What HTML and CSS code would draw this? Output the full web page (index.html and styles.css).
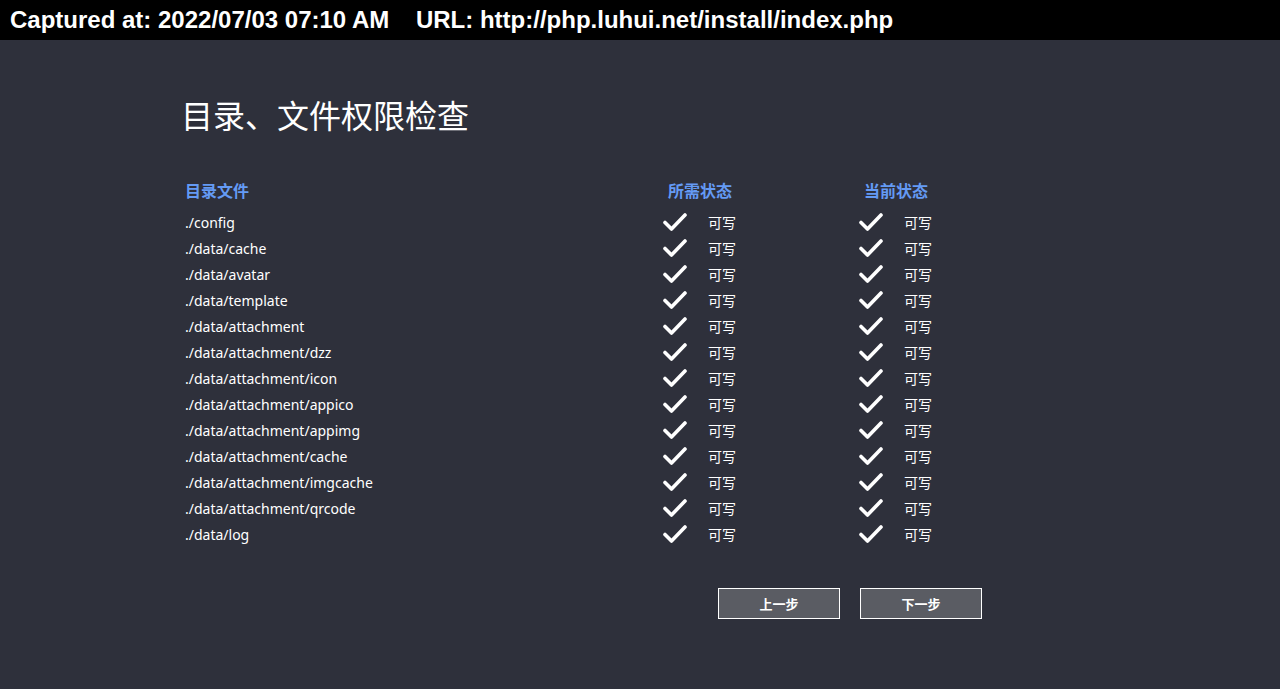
FILE: index.html
```html
<!DOCTYPE html>
<html lang="zh-CN">
<head>
  <meta charset="UTF-8">
  <title>目录、文件权限检查</title>
  <link rel="stylesheet" href="styles.css">
</head>
<body>

  <div class="capture-bar">Captured at: 2022/07/03 07:10 AM&nbsp;&nbsp;&nbsp;&nbsp;URL: http://php.luhui.net/install/index.php</div>

  <div class="main">
    <h1>目录、文件权限检查</h1>

    <div class="check-table">
      <div class="row head">
        <div class="cell">目录文件</div>
        <div class="cell state">所需状态</div>
        <div class="cell state">当前状态</div>
      </div>
    </div>

    <div class="actions">
      <button class="btn">上一步</button>
      <button class="btn">下一步</button>
    </div>
  </div>

  <script>
    var dirs = [
      "./config", "./data/cache", "./data/avatar", "./data/template",
      "./data/attachment", "./data/attachment/dzz", "./data/attachment/icon",
      "./data/attachment/appico", "./data/attachment/appimg", "./data/attachment/cache",
      "./data/attachment/imgcache", "./data/attachment/qrcode", "./data/log"
    ];

    var tick = '<svg class="tick" width="24" height="20" viewBox="0 0 24 20">' +
      '<polyline points="2,10.5 8.5,17 22,3" fill="none" stroke="#fff" stroke-width="3.6" stroke-linecap="round" stroke-linejoin="round"/></svg>';

    var table = document.querySelector(".check-table");
    dirs.forEach(function (d) {
      var row = document.createElement("div");
      row.className = "row";
      row.innerHTML =
        '<div class="cell">' + d + '</div>' +
        '<div class="cell">' + tick + '<span class="ok">可写</span></div>' +
        '<div class="cell">' + tick + '<span class="ok">可写</span></div>';
      table.appendChild(row);
    });
  </script>

</body>
</html>
```

FILE: styles.css
```css
body {
  margin: 0;
  background-color: #2e303b;
  color: #fff;
  font-family: "Noto Sans", "Noto Sans CJK SC", sans-serif;
  height: 689px;
  overflow: hidden;
}

.capture-bar {
  background: #000;
  height: 40px;
  line-height: 40px;
  padding-left: 10px;
  font-family: "Liberation Sans", Arial, sans-serif;
  font-weight: bold;
  font-size: 24px;
  white-space: nowrap;
}

.main {
  width: 918px;
  margin: 0 auto;
}

h1 {
  font-family: "Noto Sans CJK SC", sans-serif;
  font-weight: normal;
  font-size: 32px;
  line-height: 40px;
  margin: 54px 0 0 0;
}

.check-table {
  margin-top: 44px;
}

.row {
  display: grid;
  grid-template-columns: 478px 196px 196px;
  height: 26px;
  align-items: center;
  font-size: 14px;
}

.row.head {
  height: 31px;
  align-items: start;
  color: #649af4;
  font-weight: bold;
  font-size: 16px;
  font-family: "Noto Sans CJK SC", sans-serif;
}

.cell {
  padding-left: 4px;
  display: flex;
  align-items: center;
}

.cell.state {
  padding-left: 9px;
}

.tick {
  display: block;
}

.ok {
  margin-left: 21px;
  font-family: "Noto Sans CJK SC", sans-serif;
  font-size: 14px;
}

.actions {
  display: flex;
  gap: 20px;
  margin: 41px 0 0 537px;
}

.btn {
  width: 122px;
  height: 31px;
  background: #5a5c63;
  border: 1px solid #fff;
  color: #fff;
  font-family: "Noto Sans CJK SC", sans-serif;
  font-weight: bold;
  font-size: 13px;
  padding: 0;
}
```
